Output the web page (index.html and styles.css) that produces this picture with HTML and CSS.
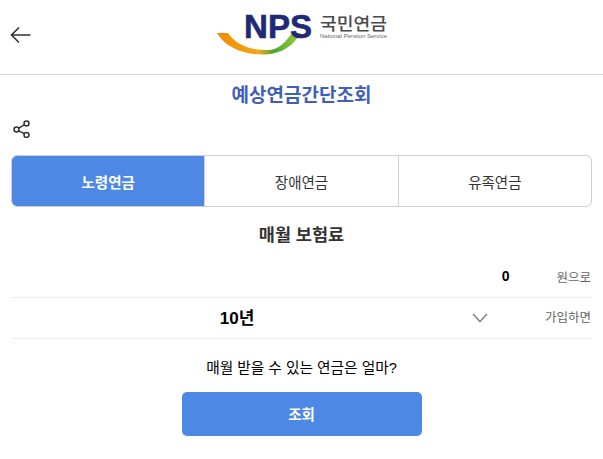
FILE: index.html
```html
<!DOCTYPE html>
<html lang="ko">
<head>
    <meta charset="UTF-8">
    <meta name="viewport" content="width=device-width, initial-scale=1.0">
    <title>예상연금간단조회</title>
    <link rel="stylesheet" href="styles.css">
</head>
<body>

    <header class="top-bar">
        <button class="back-btn" aria-label="뒤로">
            <svg width="22" height="18" viewBox="0 0 22 18"><path d="M20.5 9H1.5M9 1.5L1.5 9L9 16.5" fill="none" stroke="#333" stroke-width="1.6"/></svg>
        </button>
        <svg class="logo" width="185" height="52" viewBox="0 0 185 52">
            <defs>
                <linearGradient id="swoosh" x1="0" y1="0" x2="1" y2="0">
                    <stop offset="0" stop-color="#f58a00"/>
                    <stop offset="0.5" stop-color="#f3a71a"/>
                    <stop offset="0.68" stop-color="#48a834"/>
                    <stop offset="1" stop-color="#a9cf3c"/>
                </linearGradient>
            </defs>
            <path d="M7 25H18C26 37 42 43 60 42C70 41 76 33 82 25H91C84 37 72 46 55 46.500C34 47 16 40 7 25Z" fill="url(#swoosh)"/>
            <text class="logo-nps" x="34" y="30" textLength="68" lengthAdjust="spacingAndGlyphs">NPS</text>
            <text class="logo-kr" x="110" y="22" textLength="67" lengthAdjust="spacingAndGlyphs">국민연금</text>
            <text class="logo-en" x="110" y="30" textLength="67" lengthAdjust="spacingAndGlyphs">National Pension Service</text>
        </svg>
    </header>

    <h1 class="page-title">예상연금간단조회</h1>

    <div class="share-row">
        <svg width="18" height="18" viewBox="0 0 18 18" fill="none" stroke="#333" stroke-width="1.500">
            <circle cx="3.500" cy="9.500" r="2.500"/>
            <circle cx="13.500" cy="3.500" r="2.500"/>
            <circle cx="13.500" cy="15" r="2.500"/>
            <path d="M5.700 8.200L11.300 4.800M5.700 10.800L11.300 13.700"/>
        </svg>
    </div>

    <div class="tabs">
        <div class="tab tab-active">노령연금</div>
        <div class="tab">장애연금</div>
        <div class="tab">유족연금</div>
    </div>

    <h2 class="section-title">매월 보험료</h2>

    <div class="form-row row-amount">
        <span class="value-small">0</span>
        <span class="unit">원으로</span>
    </div>
    <div class="form-row row-period">
        <span class="value-large">10년</span>
        <svg class="chevron" width="16" height="10" viewBox="0 0 16 10"><path d="M1 1L8 8.500L15 1" fill="none" stroke="#888b92" stroke-width="1.800"/></svg>
        <span class="unit">가입하면</span>
    </div>

    <p class="question">매월 받을 수 있는 연금은 얼마?</p>
    <button class="search-btn">조회</button>

</body>
</html>
```

FILE: styles.css
```css
body {
    margin: 0;
    font-family: "Liberation Sans", "Noto Sans CJK KR", sans-serif;
    background-color: #fff;
    color: #333;
}
.top-bar {
    height: 74px;
    border-bottom: 1px solid #d5d5d5;
    display: flex;
    align-items: flex-start;
    padding-left: 10px;
}
.back-btn {
    margin: 26px 0 0 0;
    padding: 0;
    border: 0;
    background: none;
    display: flex;
}
.logo {
    margin: 8px 0 0 178px;
}
.logo-nps {
    font-family: "Liberation Sans", sans-serif;
    font-weight: bold;
    font-size: 33px;
    fill: #1f2a77;
    stroke: #1f2a77;
    stroke-width: 0.6px;
}
.logo-kr {
    font-family: "Noto Sans CJK KR", sans-serif;
    font-weight: 500;
    font-size: 17px;
    fill: #4a4a4a;
}
.logo-en {
    font-family: "Liberation Sans", sans-serif;
    font-size: 6px;
    fill: #666;
}
.page-title {
    margin: 8px 0 0 0;
    height: 26px;
    line-height: 26px;
    text-align: center;
    font-size: 19px;
    color: #3f5fb8;
}
.share-row {
    display: flex;
    margin-top: 11px;
    padding-left: 13px;
    height: 18px;
}
.tabs {
    display: flex;
    margin: 17px 11px 0 11px;
    height: 50px;
    border: 1px solid #d0d0d0;
    border-radius: 6px;
    overflow: hidden;
}
.tab {
    flex: 1 1 0;
    box-sizing: border-box;
    display: flex;
    align-items: center;
    justify-content: center;
    font-size: 14.500px;
    border-left: 1px solid #d0d0d0;
}
.tab-active {
    background-color: #4d88e5;
    color: #fff;
    font-weight: bold;
    border-left: 0;
}
.section-title {
    margin: 16px 0 0 0;
    height: 24px;
    line-height: 24px;
    text-align: center;
    font-size: 17.500px;
}
.form-row {
    display: flex;
    align-items: center;
    margin: 0 12px 0 12px;
    border-bottom: 1px solid #ececec;
    height: 37px;
    padding-bottom: 3px;
}
.row-amount {
    margin-top: 11px;
    height: 36px;
}
.value-small {
    margin-left: auto;
    font-size: 14px;
    font-weight: bold;
    color: #000;
}
.value-large {
    width: 450px;
    text-align: center;
    font-size: 17px;
    font-weight: bold;
    color: #000;
}
.unit {
    margin-left: auto;
    font-size: 12.500px;
    color: #666;
}
.value-small + .unit {
    margin-left: 47px;
}
.chevron {
    margin: 2px 0 0 10px;
}
.question {
    margin: 20px 0 0 0;
    height: 19px;
    line-height: 19px;
    text-align: center;
    font-size: 14.700px;
    color: #000;
}
.search-btn {
    display: block;
    width: 240px;
    height: 44px;
    margin: 14px auto 0 auto;
    padding-bottom: 2px;
    border: 0;
    border-radius: 5px;
    background-color: #4d88e5;
    color: #fff;
    font-family: inherit;
    font-size: 14.500px;
    font-weight: bold;
}
```
